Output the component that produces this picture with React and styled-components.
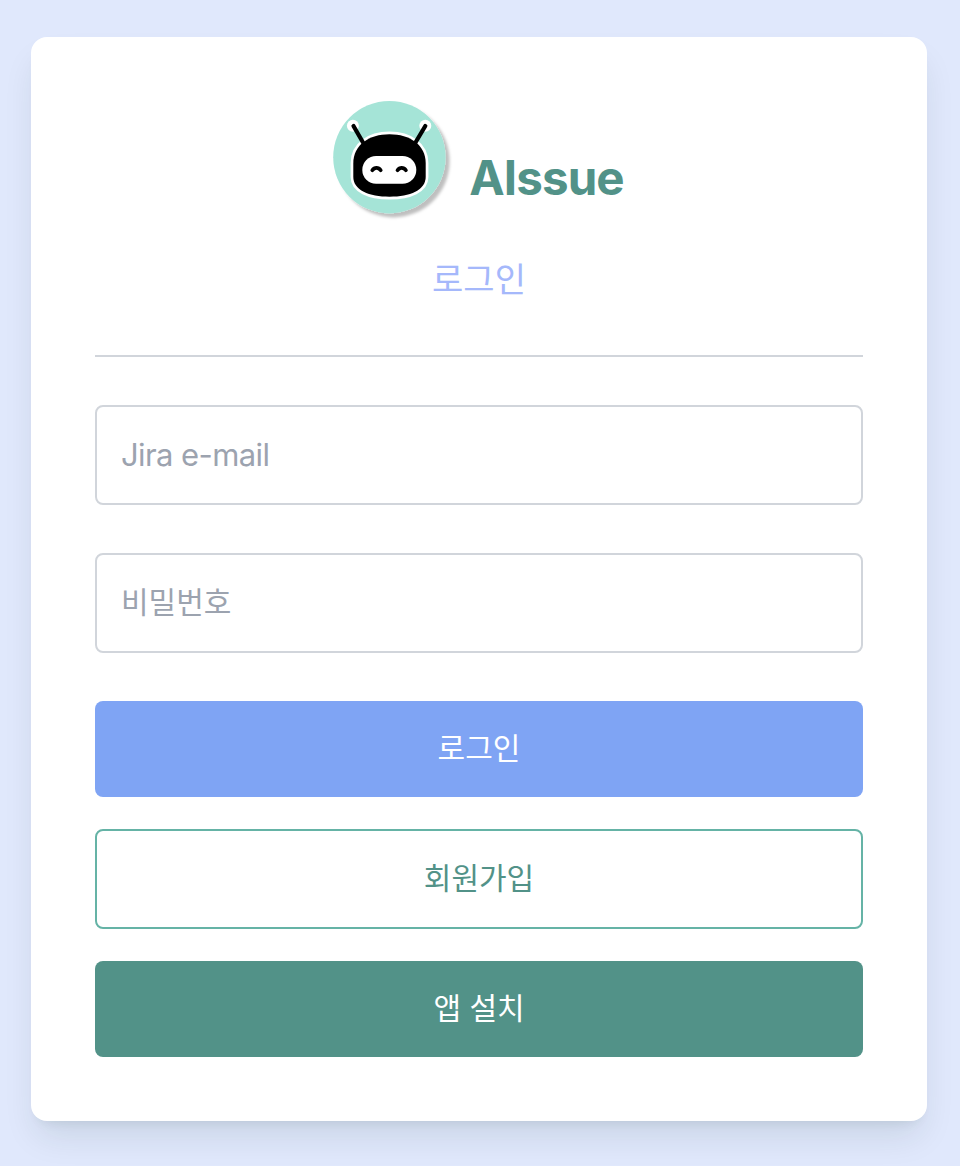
import React from "react";
import styled, { createGlobalStyle } from "styled-components";

const GlobalStyle = createGlobalStyle`
  *, *::before, *::after { box-sizing: border-box; }
  body {
    margin: 0;
    background: #e0e8fc;
    font-family: Inter, "Noto Sans CJK KR", sans-serif;
  }
`;

const Page = styled.main`
  min-height: 1166px;
  padding: 37px 33px 45px 31px;
`;

const Card = styled.section`
  display: flex;
  flex-direction: column;
  height: 1084px;
  padding: 64px;
  background: #fff;
  border-radius: 16px;
  box-shadow: 0 20px 34px -6px rgba(0, 45, 35, 0.11), 0 8px 12px -8px rgba(0, 45, 35, 0.1);
`;

const Brand = styled.header`
  display: flex;
  justify-content: center;
  align-items: flex-end;
  gap: 18px;
  height: 118px;
  padding-right: 1px;
`;

const Logo = styled.svg`
  display: block;
  width: 118px;
  height: 118px;
  overflow: visible;
`;

const BrandName = styled.h1`
  margin: 0 0 9px;
  font-size: 47.5px;
  line-height: 64px;
  font-weight: 700;
  letter-spacing: -0.9px;
  color: #529288;
`;

const Subtitle = styled.h2`
  margin: 35px 0 0;
  height: 103px;
  padding-bottom: 49px;
  border-bottom: 2px solid #d1d5db;
  font-size: 34px;
  line-height: 52px;
  font-weight: 400;
  text-align: center;
  color: #a5b8fb;
`;

const Form = styled.form`
  display: flex;
  flex-direction: column;
  margin-top: 48px;
`;

const Field = styled.input`
  width: 100%;
  height: 100px;
  margin: 0 0 48px;
  padding: 0 24px 2px;
  border: 2px solid #d1d5db;
  border-radius: 8px;
  background: #fff;
  font-family: inherit;
  font-size: ${(p) => (p.$latin ? 31 : 30)}px;
  letter-spacing: ${(p) => (p.$latin ? "-0.6px" : "normal")};
  outline: none;
  &::placeholder { color: #9ca3af; opacity: 1; }
`;

const Button = styled.button`
  height: ${(p) => (p.$outlined ? 100 : 96)}px;
  margin: 0 0 32px;
  padding: 0 0 2px;
  border: ${(p) => (p.$outlined ? "2px solid #65b3a6" : "0")};
  border-radius: 8px;
  background: ${(p) => p.$bg};
  color: ${(p) => p.$color};
  font-family: inherit;
  font-size: 30px;
  line-height: 48px;
  font-weight: 400;
`;

function RobotLogo() {
  return (
    <Logo viewBox="0 0 118 118" role="img" aria-label="AIssue">
      <defs>
        <filter id="logoShadow" x="-10%" y="-10%" width="125%" height="125%">
          <feDropShadow dx="4" dy="4" stdDeviation="1.8" floodColor="#000" floodOpacity="0.25" />
        </filter>
      </defs>
      <circle cx="56.4" cy="56.2" r="56.2" fill="#a5e4d7" filter="url(#logoShadow)" />
      <circle cx="19.9" cy="24.8" r="6" fill="#fff" />
      <circle cx="92.3" cy="24.8" r="6" fill="#fff" />
      <path
        d="M20.300 62C20.300 44 36 33.200 56.500 33.200S92.700 44 92.700 62V76C92.700 89 77 95.700 56.500 95.700S20.300 89 20.300 76Z"
        fill="#000"
        stroke="#fff"
        strokeWidth="5.4"
        paintOrder="stroke"
      />
      <path d="M20.500 25 30 41.500M92.300 25 82.500 41.500" stroke="#000" strokeWidth="4.200" strokeLinecap="round" />
      <rect x="29.3" y="55" width="54" height="27.7" rx="13.8" fill="#fff" />
      <path
        d="M39.300 69.300C41.500 66 45.500 66 47.700 69.300M64.500 69.300C66.700 66 70.700 66 72.900 69.300"
        fill="none"
        stroke="#000"
        strokeWidth="3.700"
        strokeLinecap="round"
      />
    </Logo>
  );
}

export default function App() {
  return (
    <>
      <GlobalStyle />
      <Page>
        <Card>
          <Brand>
            <RobotLogo />
            <BrandName>AIssue</BrandName>
          </Brand>
          <Subtitle>로그인</Subtitle>
          <Form>
            <Field type="email" placeholder="Jira e-mail" $latin />
            <Field type="password" placeholder="비밀번호" />
            <Button type="button" $bg="#7fa4f4" $color="#fff">로그인</Button>
            <Button type="button" $outlined $bg="#fff" $color="#529288">회원가입</Button>
            <Button type="button" $bg="#529288" $color="#fff">앱 설치</Button>
          </Form>
        </Card>
      </Page>
    </>
  );
}
